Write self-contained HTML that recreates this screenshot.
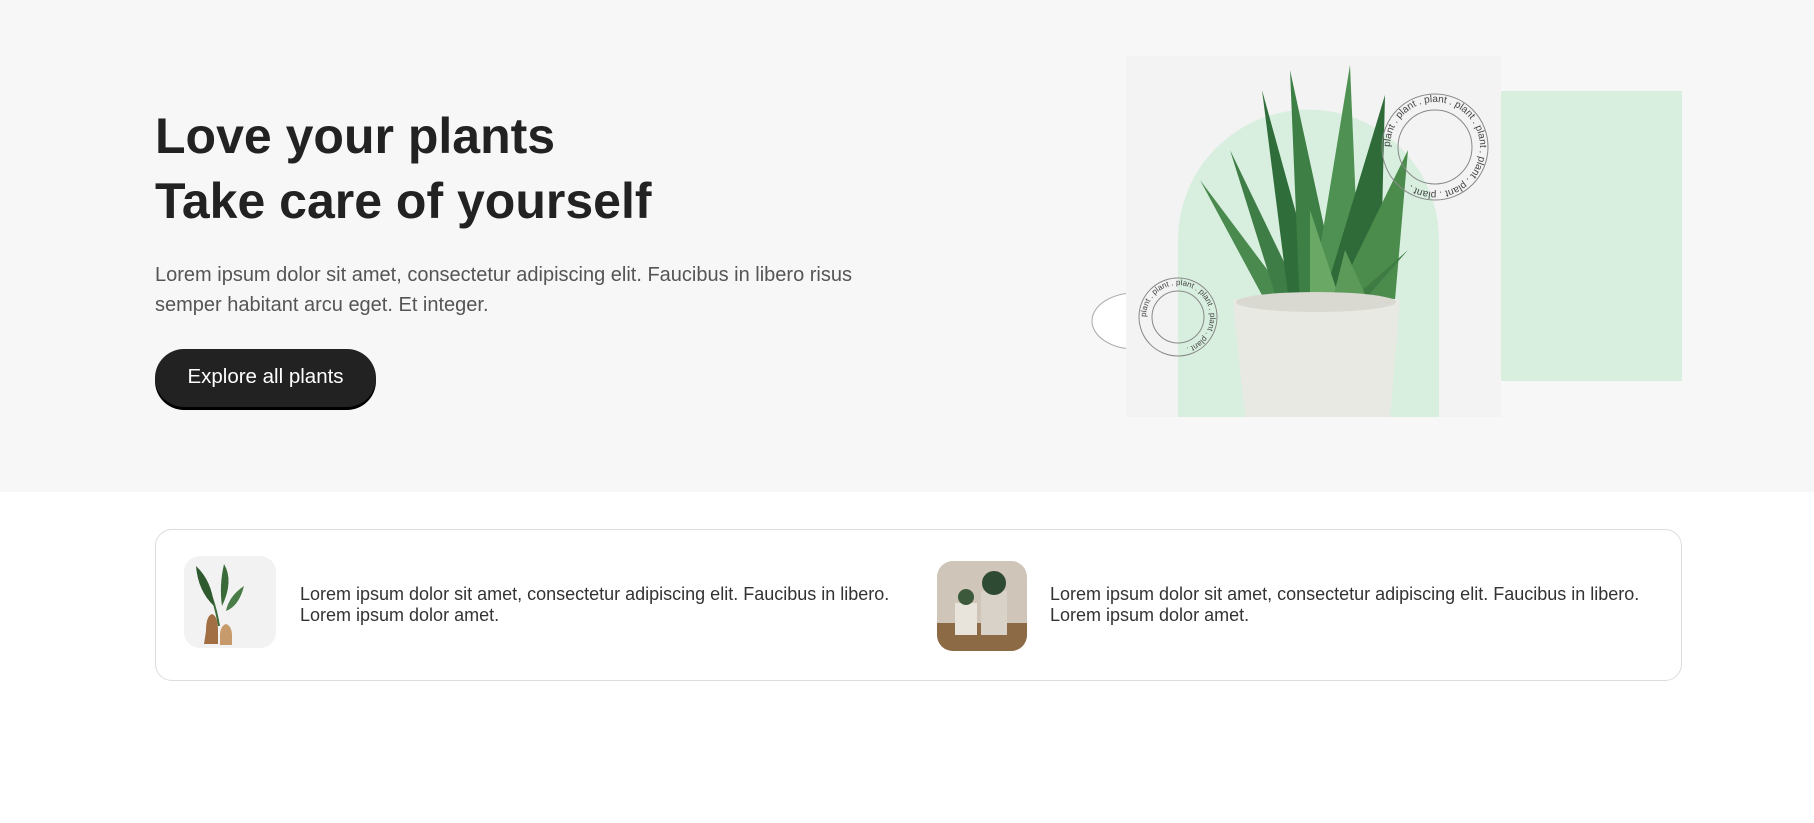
<!DOCTYPE html>
<html><head><meta charset="utf-8"><style>
*{margin:0;padding:0;box-sizing:border-box}
body{width:1814px;height:823px;background:#fff;font-family:"Liberation Sans",Arial,sans-serif;position:relative;overflow:hidden}
.hero{position:absolute;left:0;top:0;width:1814px;height:492px;background:#f7f7f7}
h1{position:absolute;left:155px;top:104px;font-size:50px;line-height:65px;font-weight:700;color:#222}
.p{position:absolute;left:155px;top:260px;width:740px;font-size:20px;line-height:30px;color:#555}
.btn{position:absolute;left:155px;top:349px;width:221px;height:58px;border-radius:29px;background:#222;color:#fff;font-size:20.5px;line-height:56px;text-align:center;box-shadow:0 3px 0 #000}
.card{position:absolute;left:155px;top:529px;width:1527px;height:152px;border:1px solid #ddd;border-radius:17px}
.t{position:absolute;font-size:18px;line-height:21px;color:#333}
</style></head><body>
<div class="hero"></div>
<h1>Love your plants<br>Take care of yourself</h1>
<div class="p">Lorem ipsum dolor sit amet, consectetur adipiscing elit. Faucibus in libero risus semper habitant arcu eget. Et integer.</div>
<div class="btn">Explore all plants</div>

<svg style="position:absolute;left:0;top:0" width="1814" height="492">
<defs>
<path id="c1" d="M1435,147 m-45,0 a45,45 0 1,1 90,0 a45,45 0 1,1 -90,0"/>
<path id="c2" d="M1178,317 m-32,0 a32,32 0 1,1 64,0 a32,32 0 1,1 -64,0"/>
</defs>
<ellipse cx="1135" cy="321" rx="43" ry="28" fill="#fff" stroke="#aaa"/>
<rect x="1501" y="91" width="181" height="290" fill="#d8efdf"/>
<rect x="1126" y="56" width="375" height="361" fill="#f3f3f3"/>
<path d="M1178,417 V240 A130,130 0 0 1 1439,240 V417 Z" fill="#d8efdf"/>
<g fill="#3f7d47">
<path d="M1270,310 L1200,180 L1290,300Z" fill="#4a8a4f"/>
<path d="M1280,310 L1230,150 L1300,295Z"/>
<path d="M1290,310 L1262,90 L1320,300Z" fill="#2f6e3a"/>
<path d="M1300,310 L1290,70 L1340,300Z" fill="#3d7f45"/>
<path d="M1310,310 L1350,65 L1360,300Z" fill="#4f9152"/>
<path d="M1320,310 L1385,95 L1380,300Z" fill="#2e6b38"/>
<path d="M1330,310 L1408,150 L1395,300Z" fill="#4b8c4d"/>
<path d="M1340,310 L1408,250 L1360,305Z" fill="#3e7c43"/>
<path d="M1310,310 L1310,210 L1340,300Z" fill="#6aa865"/>
<path d="M1330,310 L1345,250 L1370,305Z" fill="#5c9a5a"/>
</g>
<path d="M1233,300 Q1316,285 1400,300 L1390,417 L1245,417 Z" fill="#e9e9e3"/>
<ellipse cx="1316" cy="302" rx="80" ry="10" fill="#d9d9d2"/>
<circle cx="1435" cy="147" r="53" fill="none" stroke="#888"/>
<circle cx="1435" cy="147" r="37" fill="none" stroke="#888"/>
<text font-size="10" fill="#444" font-family="Liberation Sans"><textPath href="#c1">plant . plant . plant . plant . plant . plant . plant . plant .</textPath></text>
<circle cx="1178" cy="317" r="39" fill="none" stroke="#888"/>
<circle cx="1178" cy="317" r="26" fill="none" stroke="#888"/>
<text font-size="8" fill="#444" font-family="Liberation Sans"><textPath href="#c2">plant . plant . plant . plant . plant . plant .</textPath></text>
</svg>

<div class="card"></div>
<svg style="position:absolute;left:184px;top:556px" width="92" height="92">
<rect width="92" height="92" rx="16" fill="#f2f2f2"/>
<path d="M18,20 Q30,40 35,70" stroke="#3c6b3a" stroke-width="2" fill="none"/>
<path d="M12,10 Q28,25 30,50 Q14,35 12,10Z" fill="#2f5a2f"/>
<path d="M40,8 Q35,30 38,50 Q50,25 40,8Z" fill="#3a6a38"/>
<path d="M60,30 Q45,40 42,55 Q55,50 60,30Z" fill="#4a7c48"/>
<path d="M22,75 Q22,60 28,58 Q34,60 34,75 L34,88 L20,88Z" fill="#a26f45"/>
<path d="M36,80 Q36,70 42,68 Q48,70 48,80 L48,89 L36,89Z" fill="#c79a6c"/>
</svg>
<div class="t" style="left:300px;top:584px">Lorem ipsum dolor sit amet, consectetur adipiscing elit. Faucibus in libero.<br>Lorem ipsum dolor amet.</div>
<svg style="position:absolute;left:937px;top:561px" width="90" height="90">
<defs><clipPath id="r"><rect width="90" height="90" rx="16"/></clipPath></defs>
<g clip-path="url(#r)">
<rect width="90" height="90" fill="#cfc5b8"/>
<rect y="62" width="90" height="28" fill="#8c6a45"/>
<rect x="18" y="42" width="22" height="32" fill="#e8e4dc"/>
<rect x="44" y="30" width="26" height="44" fill="#d8d2c8"/>
<circle cx="57" cy="22" r="12" fill="#2f4a33"/>
<circle cx="29" cy="36" r="8" fill="#3c5a3b"/>
</g></svg>
<div class="t" style="left:1050px;top:584px">Lorem ipsum dolor sit amet, consectetur adipiscing elit. Faucibus in libero.<br>Lorem ipsum dolor amet.</div>
</body></html>
